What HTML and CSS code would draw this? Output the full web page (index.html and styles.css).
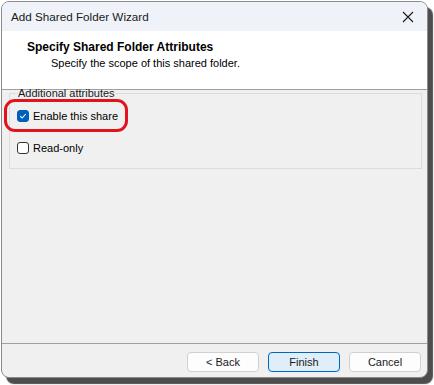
FILE: index.html
```html
<!DOCTYPE html>
<html>
<head>
<meta charset="utf-8">
<link rel="stylesheet" href="styles.css">
</head>
<body>
<div class="window">
  <div class="titlebar">
    <span class="title">Add Shared Folder Wizard</span>
    <svg class="close" width="12" height="12" viewBox="0 0 12 12"><path d="M1 1 L11 11 M11 1 L1 11" stroke="#1a1a1a" stroke-width="1.1" fill="none"/></svg>
  </div>
  <div class="header">
    <div class="h-title">Specify Shared Folder Attributes</div>
    <div class="h-sub">Specify the scope of this shared folder.</div>
  </div>
  <div class="content">
    <fieldset class="group">
      <legend>Additional attributes</legend>
      <div class="option highlighted">
        <span class="cb checked"><svg width="10" height="10" viewBox="0 0 10 10"><path d="M2.2 5.2 L4.1 7 L7.8 3" stroke="#fff" stroke-width="1.1" fill="none"/></svg></span>
        <span class="label">Enable this share</span>
      </div>
      <div class="option">
        <span class="cb"></span>
        <span class="label">Read-only</span>
      </div>
    </fieldset>
  </div>
  <div class="footer">
    <button class="btn">&lt; Back</button>
    <button class="btn primary">Finish</button>
    <button class="btn">Cancel</button>
  </div>
</div>
</body>
</html>
```
FILE: styles.css
```css
html, body {
  margin: 0;
  padding: 0;
  background: #ffffff;
}
html {
  height: 385px;
  overflow: hidden;
}
body {
  height: 385px;
  padding: 1px 0 0 1px;
  box-sizing: border-box;
  font-family: "Liberation Sans", Arial, sans-serif;
  font-size: 11px;
  color: #000;
}
.window {
  box-sizing: border-box;
  width: 427px;
  height: 377px;
  border: 1px solid #8c8c8c;
  border-radius: 8px;
  box-shadow: 5px 6px 1px #4d4d4d;
  overflow: hidden;
  display: flex;
  flex-direction: column;
  background: #f0f0f0;
}
.titlebar {
  height: 29px;
  flex: none;
  background: #eff3f9;
  display: flex;
  align-items: center;
  justify-content: space-between;
  padding: 0 10px 0 9px;
}
.title {
  font-size: 11.7px;
  color: #1a1a1a;
}
.close {
  margin-right: 3px;
}
.header {
  flex: none;
  height: 59px;
  box-sizing: border-box;
  background: #fff;
  border-bottom: 1px solid #a0a0a0;
  padding: 9px 0 0 25px;
}
.h-title {
  font-size: 12px;
  font-weight: bold;
  line-height: 14px;
}
.h-sub {
  padding-left: 24px;
  line-height: 14px;
  margin-top: 2px;
}
.content {
  flex: 1;
  padding: 0 5px 0 7px;
}
.group {
  margin: -3px 0 0 0;
  height: 82px;
  box-sizing: border-box;
  border: 1px solid #dcdcdc;
  padding: 0 0 0 7px;
  display: flex;
  flex-direction: column;
}
.group legend {
  padding: 0 1px;
  margin-left: 0;
  color: #1a1a1a;
  line-height: 12px;
}
.option {
  display: flex;
  align-items: center;
  gap: 4px;
  height: 20px;
  width: max-content;
}
.option + .option {
  margin-top: 6px;
}
.highlighted {
  margin-left: -13px;
  padding: 4px 7px 3px 10px;
  border: 3px solid #e3131d;
  border-radius: 11px;
}
.cb {
  box-sizing: border-box;
  width: 12px;
  height: 12px;
  border: 1px solid #333;
  border-radius: 3px;
  background: #fff;
  display: inline-flex;
  align-items: center;
  justify-content: center;
}
.cb.checked {
  background: #005fb8;
  border-color: #005fb8;
}
.footer {
  flex: none;
  box-sizing: border-box;
  height: 34px;
  border-top: 1px solid #a0a0a0;
  display: flex;
  justify-content: flex-end;
  align-items: flex-start;
  gap: 9px;
  padding: 8px 6px 0 0;
}
.btn {
  font-family: inherit;
  font-size: 11px;
  width: 72px;
  height: 20px;
  background: #fdfdfd;
  border: 1px solid #d0d0d0;
  border-radius: 4px;
  color: #1a1a1a;
  padding: 0;
}
.btn.primary {
  background: #e0eef9;
  border-color: #0067c0;
}
```
